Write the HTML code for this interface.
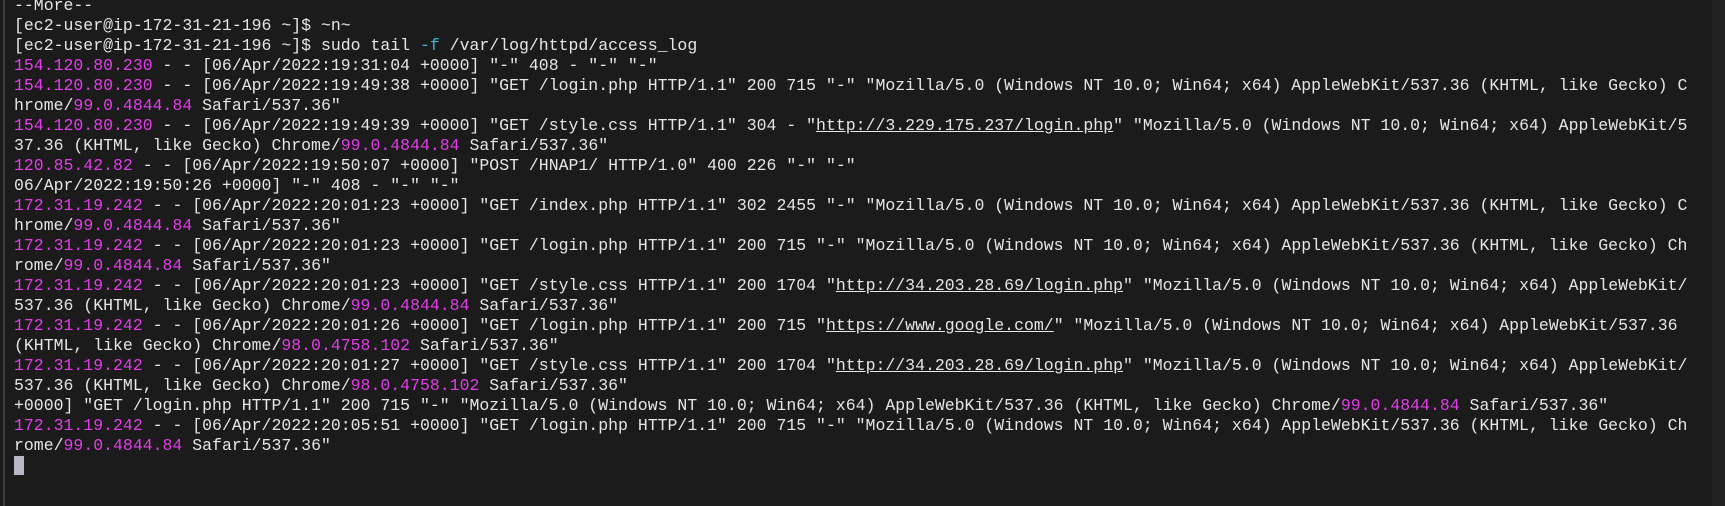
<!DOCTYPE html>
<html><head><meta charset="utf-8"><style>
html,body{margin:0;padding:0;background:#1b1b1b;width:1725px;height:506px;overflow:hidden}
.bar{position:absolute;left:3px;top:0;width:2px;height:506px;background:#3c3c3c}
.sb{position:absolute;left:1712px;top:0;width:13px;height:506px;background:#222}
pre{position:absolute;left:14px;top:-4px;margin:0;font-family:"Liberation Mono",monospace;font-size:16.5px;line-height:20px;color:#e6e6e6;white-space:pre}
.m{color:#e23ee8}.c{color:#3ab4d6}u{text-decoration:underline}
.cur{display:inline-block;width:10px;height:19px;background:#b8b8c4;vertical-align:top}
</style></head><body>
<div class="bar"></div><div class="sb"></div>
<pre>--More--
[ec2-user@ip-172-31-21-196 ~]$ ~n~
[ec2-user@ip-172-31-21-196 ~]$ sudo tail <span class="c">-f</span> /var/log/httpd/access_log
<span class="m">154.120.80.230</span> - - [06/Apr/2022:19:31:04 +0000] "-" 408 - "-" "-"
<span class="m">154.120.80.230</span> - - [06/Apr/2022:19:49:38 +0000] "GET /login.php HTTP/1.1" 200 715 "-" "Mozilla/5.0 (Windows NT 10.0; Win64; x64) AppleWebKit/537.36 (KHTML, like Gecko) C
hrome/<span class="m">99.0.4844.84</span> Safari/537.36"
<span class="m">154.120.80.230</span> - - [06/Apr/2022:19:49:39 +0000] "GET /style.css HTTP/1.1" 304 - "<u>http://3.229.175.237/login.php</u>" "Mozilla/5.0 (Windows NT 10.0; Win64; x64) AppleWebKit/5
37.36 (KHTML, like Gecko) Chrome/<span class="m">99.0.4844.84</span> Safari/537.36"
<span class="m">120.85.42.82</span> - - [06/Apr/2022:19:50:07 +0000] "POST /HNAP1/ HTTP/1.0" 400 226 "-" "-"
06/Apr/2022:19:50:26 +0000] "-" 408 - "-" "-"
<span class="m">172.31.19.242</span> - - [06/Apr/2022:20:01:23 +0000] "GET /index.php HTTP/1.1" 302 2455 "-" "Mozilla/5.0 (Windows NT 10.0; Win64; x64) AppleWebKit/537.36 (KHTML, like Gecko) C
hrome/<span class="m">99.0.4844.84</span> Safari/537.36"
<span class="m">172.31.19.242</span> - - [06/Apr/2022:20:01:23 +0000] "GET /login.php HTTP/1.1" 200 715 "-" "Mozilla/5.0 (Windows NT 10.0; Win64; x64) AppleWebKit/537.36 (KHTML, like Gecko) Ch
rome/<span class="m">99.0.4844.84</span> Safari/537.36"
<span class="m">172.31.19.242</span> - - [06/Apr/2022:20:01:23 +0000] "GET /style.css HTTP/1.1" 200 1704 "<u>http://34.203.28.69/login.php</u>" "Mozilla/5.0 (Windows NT 10.0; Win64; x64) AppleWebKit/
537.36 (KHTML, like Gecko) Chrome/<span class="m">99.0.4844.84</span> Safari/537.36"
<span class="m">172.31.19.242</span> - - [06/Apr/2022:20:01:26 +0000] "GET /login.php HTTP/1.1" 200 715 "<u>https://www.google.com/</u>" "Mozilla/5.0 (Windows NT 10.0; Win64; x64) AppleWebKit/537.36
(KHTML, like Gecko) Chrome/<span class="m">98.0.4758.102</span> Safari/537.36"
<span class="m">172.31.19.242</span> - - [06/Apr/2022:20:01:27 +0000] "GET /style.css HTTP/1.1" 200 1704 "<u>http://34.203.28.69/login.php</u>" "Mozilla/5.0 (Windows NT 10.0; Win64; x64) AppleWebKit/
537.36 (KHTML, like Gecko) Chrome/<span class="m">98.0.4758.102</span> Safari/537.36"
+0000] "GET /login.php HTTP/1.1" 200 715 "-" "Mozilla/5.0 (Windows NT 10.0; Win64; x64) AppleWebKit/537.36 (KHTML, like Gecko) Chrome/<span class="m">99.0.4844.84</span> Safari/537.36"
<span class="m">172.31.19.242</span> - - [06/Apr/2022:20:05:51 +0000] "GET /login.php HTTP/1.1" 200 715 "-" "Mozilla/5.0 (Windows NT 10.0; Win64; x64) AppleWebKit/537.36 (KHTML, like Gecko) Ch
rome/<span class="m">99.0.4844.84</span> Safari/537.36"
<span class="cur"></span></pre>
</body></html>
